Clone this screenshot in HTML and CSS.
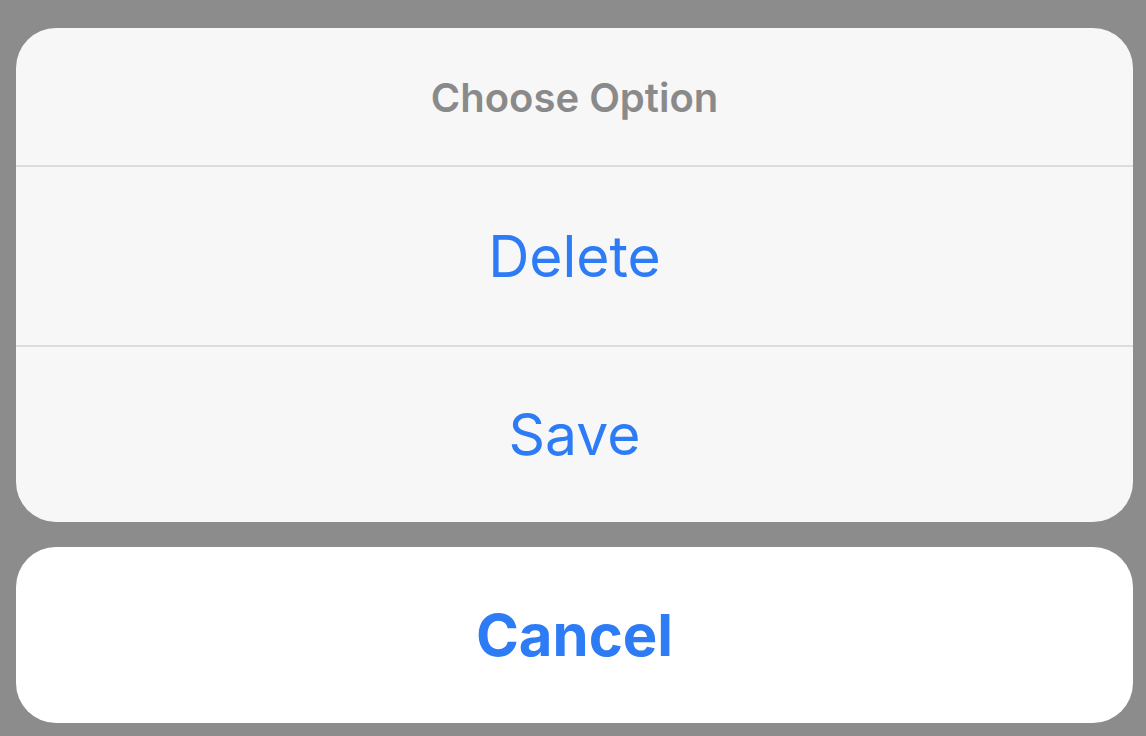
FILE: index.html
```html
<!DOCTYPE html>
<html>
<head>
<meta charset="utf-8">
<link rel="stylesheet" href="styles.css">
</head>
<body>
<div class="sheet">
  <div class="group">
    <div class="title">Choose Option</div>
    <div class="action">Delete</div>
    <div class="action">Save</div>
  </div>
  <div class="cancel">Cancel</div>
</div>
</body>
</html>
```

FILE: styles.css
```css
html, body {
  margin: 0;
  padding: 0;
  background: #8c8c8c;
  width: 1146px;
  height: 736px;
  overflow: hidden;
}
.sheet {
  padding: 28px 13px 0 16px;
  display: flex;
  flex-direction: column;
  gap: 25px;
  font-family: Inter, "Liberation Sans", sans-serif;
}
.group {
  background: #f7f7f7;
  border-radius: 40px;
  display: flex;
  flex-direction: column;
  overflow: hidden;
}
.title {
  height: 139px;
  display: flex;
  align-items: center;
  justify-content: center;
  color: #8a8a8a;
  font-size: 40px;
  font-weight: 600;
  border-bottom: 2px solid #dddddd;
  padding-top: 2px;
  box-sizing: border-box;
}
.action {
  height: 178px;
  display: flex;
  align-items: center;
  justify-content: center;
  color: #2d7cf6;
  font-size: 57px;
  font-weight: 400;
  box-sizing: border-box;
}
.action:last-child {
  height: 177px;
}
.action + .action {
  border-top: 2px solid #dddddd;
}
.cancel {
  background: #ffffff;
  border-radius: 40px;
  height: 176px;
  display: flex;
  align-items: center;
  justify-content: center;
  color: #2d7cf6;
  font-size: 58px;
  font-weight: 700;
}
```
